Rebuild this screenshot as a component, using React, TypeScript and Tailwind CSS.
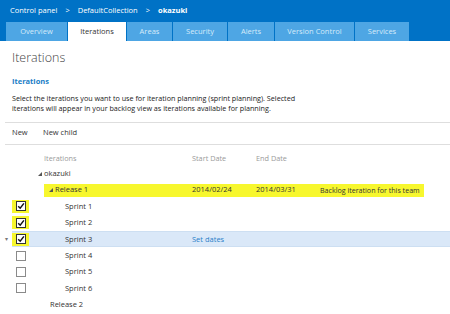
import React from "react";

const tabs = [
    { label: "Overview", w: "w-[61px]" },
    { label: "Iterations", w: "w-[58px]", active: true },
    { label: "Areas", w: "w-[45px]" },
    { label: "Security", w: "w-[54px]" },
    { label: "Alerts", w: "w-[46px]" },
    { label: "Version Control", w: "w-[79px]" },
    { label: "Services", w: "w-[54px]" },
];

type Row = {
    name: string;
    indent: string;
    nameW: string;
    toggle?: boolean;
    check?: "on" | "off";
    start?: string;
    end?: string;
    note?: string;
    marked?: boolean;
    selected?: boolean;
    setDates?: boolean;
};

// name column ends at x=192 (start date column)
const rows: Row[] = [
    { name: "okazuki", indent: "w-[4px]", nameW: "w-[154px]", toggle: true },
    { name: "Release 1", indent: "w-[10px]", nameW: "w-[148px]", toggle: true, start: "2014/02/24", end: "2014/03/31", note: "Backlog iteration for this team", marked: true },
    { name: "Sprint 1", indent: "w-[31px]", nameW: "w-[127px]", check: "on" },
    { name: "Sprint 2", indent: "w-[31px]", nameW: "w-[127px]", check: "on" },
    { name: "Sprint 3", indent: "w-[31px]", nameW: "w-[127px]", check: "on", selected: true, setDates: true },
    { name: "Sprint 4", indent: "w-[31px]", nameW: "w-[127px]", check: "off" },
    { name: "Sprint 5", indent: "w-[31px]", nameW: "w-[127px]", check: "off" },
    { name: "Sprint 6", indent: "w-[31px]", nameW: "w-[127px]", check: "off" },
    { name: "Release 2", indent: "w-[16px]", nameW: "w-[142px]" },
];

function Toggle() {
    return (
        <svg width="4" height="4" viewBox="0 0 4 4" className="shrink-0">
            <polygon points="4,0 4,4 0,4" fill="#555" />
        </svg>
    );
}

function CheckBox({ on }: { on: boolean }) {
    return (
        <div className={`w-[17px] h-[13px] flex items-center justify-center ${on ? "bg-[#f7f72e]" : ""}`}>
            <div className={`w-[10px] h-[10px] bg-white border flex items-center justify-center ${on ? "border-[#333]" : "border-[#8a8a8a]"}`}>
                {on && (
                    <svg width="8" height="8" viewBox="0 0 8 8">
                        <path d="M1.2 4.2 L3.2 6.2 L6.9 1.4" stroke="#111" strokeWidth="1.5" fill="none" />
                    </svg>
                )}
            </div>
        </div>
    );
}

export default function App() {
    return (
        <div className="w-[450px] h-[314px] overflow-hidden bg-white text-[#333]" style={{ fontFamily: '"Open Sans", "Noto Sans", sans-serif' }}>
            {/* Header */}
            <div className="bg-[#0072c6] h-[41px]">
                <div className="h-[22px] flex items-center pl-[10px] text-[7.5px] text-white">
                    <span>Control panel</span>
                    <span className="ml-[8px] mr-[8px]">&gt;</span>
                    <span>DefaultCollection</span>
                    <span className="ml-[8px] mr-[8px]">&gt;</span>
                    <span className="font-bold">okazuki</span>
                </div>
                <div className="h-[19px] flex pl-[6px] gap-[1px]">
                    {tabs.map(t => (
                        <div
                            key={t.label}
                            className={`${t.w} h-full flex items-center justify-center text-[7.5px] ${t.active ? "bg-white text-[#333]" : "bg-[#4ea6e4] text-[#d6ebfa]"}`}
                        >
                            {t.label}
                        </div>
                    ))}
                </div>
            </div>

            {/* Body */}
            <div className="pl-[12px]">
                <div className="mt-[9px] h-[16px] leading-[16px] text-[12.5px] font-light text-[#444]">Iterations</div>
                <div className="mt-[9.5px] h-[11px] leading-[11px] text-[7.5px] font-bold text-[#1a7dc6]">Iterations</div>
                <p className="mt-[6px] text-[7.2px] leading-[10.5px] text-[#222]">
                    Select the iterations you want to use for iteration planning (sprint planning). Selected
                    <br />
                    iterations will appear in your backlog view as iterations available for planning.
                </p>
            </div>
            <div className="mt-[8px] ml-[5px] border-t border-[#dedede]" />
            <div className="h-[21px] flex items-center pl-[12px] text-[7.5px] text-[#333]">
                <span className="w-[31px]">New</span>
                <span>New child</span>
            </div>
            <div className="ml-[5px] border-t border-[#dedede]" />

            {/* Column headers */}
            <div className="mt-[7px] h-[14px] flex items-center text-[7.3px] text-[#9a9a9a]">
                <span className="ml-[44px] w-[148px]">Iterations</span>
                <span className="w-[64px]">Start Date</span>
                <span>End Date</span>
            </div>

            {/* Tree rows */}
            <div className="text-[7.5px]">
                {rows.map(r => (
                    <div key={r.name} className="h-[16.4px] flex">
                        <div className="w-[12px] flex items-center justify-center text-[6px] text-[#777]">
                            {r.selected && "▾"}
                        </div>
                        <div className={`flex-1 flex items-center ${r.selected ? "bg-[#dae8f8] border-y border-[#cddff2]" : ""}`}>
                            <div className="w-[22px]">
                                {r.check && <CheckBox on={r.check === "on"} />}
                            </div>
                            <div className={r.indent} />
                            <div className={`flex items-center h-[13px] whitespace-nowrap ${r.marked ? "bg-[#f7f72e]" : ""}`}>
                                <div className={`flex items-center ${r.nameW} ${r.marked ? "pl-[5px]" : ""}`}>
                                    {r.toggle && <Toggle />}
                                    <span className={r.toggle ? "ml-[2px]" : ""}>{r.name}</span>
                                </div>
                                {r.marked && (
                                    <>
                                        <span className="w-[64px]">{r.start}</span>
                                        <span className="w-[64px]">{r.end}</span>
                                        <span className="w-[104px] text-[7.1px]">{r.note}</span>
                                    </>
                                )}
                                {r.setDates && <span className="text-[#2a7fc8]">Set dates</span>}
                            </div>
                        </div>
                    </div>
                ))}
            </div>
        </div>
    );
}
